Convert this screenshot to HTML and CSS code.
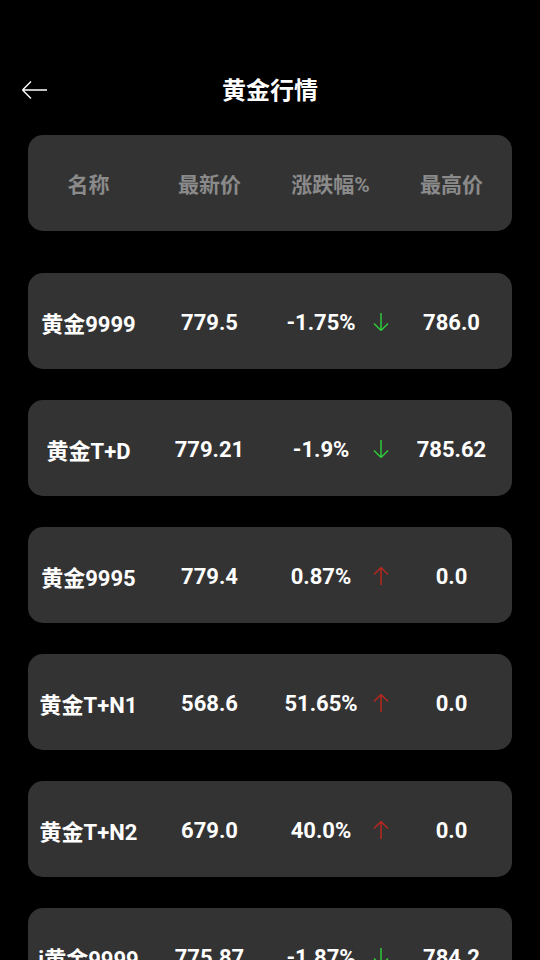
FILE: index.html
```html
<!DOCTYPE html>
<html>
<head>
    <title>黄金行情</title>
    <link rel="stylesheet" href="styles.css">
</head>
<body>
    <div class="topbar">
        <span class="back">
            <svg width="28" height="20" viewBox="0 0 28 20">
                <path d="M1.5 10 H26 M1.5 10 L10 1.5 M1.5 10 L10 18.5" fill="none" stroke="#fff" stroke-width="1.4"/>
            </svg>
        </span>
        <h1 class="title">黄金行情</h1>
    </div>

    <div class="list">
        <div class="card head">
            <div class="cell">名称</div>
            <div class="cell">最新价</div>
            <div class="cell">涨跌幅%</div>
            <div class="cell">最高价</div>
        </div>

        <div id="rows"></div>
    </div>

    <script>
        var quotes = [
            { name: '黄金9999', price: '779.5', change: '-1.75%', high: '786.0' },
            { name: '黄金T+D', price: '779.21', change: '-1.9%', high: '785.62' },
            { name: '黄金9995', price: '779.4', change: '0.87%', high: '0.0' },
            { name: '黄金T+N1', price: '568.6', change: '51.65%', high: '0.0' },
            { name: '黄金T+N2', price: '679.0', change: '40.0%', high: '0.0' },
            { name: 'i黄金9999', price: '775.87', change: '-1.87%', high: '784.2' }
        ];

        var up = '<svg width="18" height="20" viewBox="0 0 18 20"><path d="M9 1.5 V19 M9 1.5 L2 8.5 M9 1.5 L16 8.5" fill="none" stroke="#b8281f" stroke-width="1.5"/></svg>';
        var down = '<svg width="18" height="20" viewBox="0 0 18 20"><path d="M9 1 V18.5 M9 18.5 L2 11.5 M9 18.5 L16 11.5" fill="none" stroke="#2fc83a" stroke-width="1.5"/></svg>';

        document.getElementById('rows').innerHTML = quotes.map(function (q) {
            var falling = q.change.charAt(0) === '-';
            return `<div class="card row">
                <div class="cell">${q.name}</div>
                <div class="cell">${q.price}</div>
                <div class="cell change">
                    <span class="pct">${q.change}</span>
                    <span class="arrow">${falling ? down : up}</span>
                </div>
                <div class="cell">${q.high}</div>
            </div>`;
        }).join('');
    </script>
</body>
</html>
```

FILE: styles.css
```css
body {
    margin: 0;
    background-color: #000;
    color: #fff;
    font-family: Roboto, "Noto Sans CJK SC", sans-serif;
    overflow: hidden;
}

.topbar {
    position: relative;
    height: 60px;
    margin-top: 58px;
    display: flex;
    align-items: center;
    justify-content: center;
}

.back {
    position: absolute;
    left: 21px;
    top: 22px;
    line-height: 0;
}

.title {
    margin: 0;
    font-size: 24px;
    font-weight: bold;
}

.list {
    padding: 17px 28px 0;
}

#rows {
    display: flex;
    flex-direction: column;
    gap: 31px;
}

.card {
    display: grid;
    grid-template-columns: repeat(4, 1fr);
    align-items: center;
    height: 96px;
    border-radius: 15px;
    background-color: #333;
}

.head {
    margin-bottom: 42px;
}

.cell {
    text-align: center;
    font-weight: bold;
    white-space: nowrap;
}

.head .cell {
    color: #8a8a8a;
    font-size: 21px;
}

.row .cell {
    font-size: 22px;
    padding-top: 2px;
}

.change {
    display: flex;
    align-items: center;
}

.pct {
    flex: 1;
    text-align: center;
}

.arrow {
    width: 18px;
    margin-right: 1px;
    line-height: 0;
}
```
